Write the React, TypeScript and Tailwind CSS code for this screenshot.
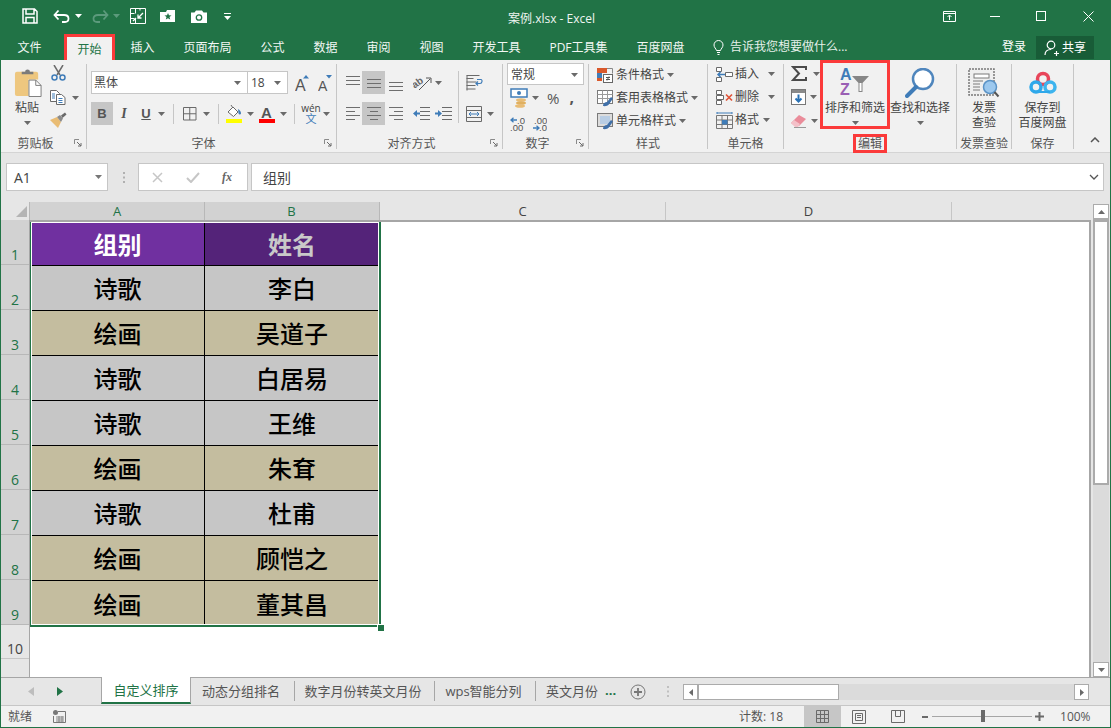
import React from "react";

const Caret = ({ c = "#6a6a6a", className = "" }: { c?: string; className?: string }) => (
  <svg width="7" height="4" viewBox="0 0 7 4" className={`shrink-0 ${className}`}><path d="M0 0h7L3.5 4z" fill={c} /></svg>
);

const Launcher = () => (
  <svg width="8" height="8" viewBox="0 0 8 8" className="absolute right-[4px] top-[2px]">
    <path d="M.5 5V.5H5" fill="none" stroke="#8a8a8a" /><path d="M3 3l4 4M7 4v3H4" fill="none" stroke="#6a6a6a" />
  </svg>
);

const Group = ({ w, label, launcher, children, boxed }: { w: string; label: string; launcher?: boolean; children: React.ReactNode; boxed?: boolean }) => (
  <div className={`${w} shrink-0 h-[85px] border-r border-[#c6c6c6] flex flex-col`}>
    <div className="h-[73px] flex">{children}</div>
    <div className={`h-[12px] relative flex justify-center text-[12px] leading-[13px] text-[#555] ${launcher ? "pr-[16px]" : ""}`}>
      {boxed ? <span className="px-[2px] h-[13px] outline-[3px] outline-[#fb3a3a] leading-[13px]">{label}</span> : <span>{label}</span>}
      {launcher && <Launcher />}
    </div>
  </div>
);

const Lines = ({ kind }: { kind: "top" | "mid" | "bot" | "left" | "center" | "right" }) => {
  const y = kind === "top" ? [3, 7, 11] : kind === "mid" ? [6, 10, 14] : kind === "bot" ? [9, 13, 17] : [3, 7, 11, 15];
  const xs: Record<string, [number, number][]> = {
    left: [[1, 15], [1, 10], [1, 15], [1, 10]],
    center: [[1, 15], [4, 12], [1, 15], [4, 12]],
    right: [[1, 15], [6, 15], [1, 15], [6, 15]],
  };
  return (
    <svg width="16" height="20" viewBox="0 0 16 20">
      {y.map((v, i) => {
        const p = xs[kind]?.[i] ?? [1, 15];
        return <path key={i} d={`M${p[0]} ${v}.5H${p[1]}`} stroke="#6e6e6e" />;
      })}
    </svg>
  );
};

const Paste = () => (
  <svg width="29" height="29" viewBox="0 0 30 30">
    <path d="M1 6a2 2 0 0 1 2-2h20a2 2 0 0 1 2 2v6H15v17H3a2 2 0 0 1-2-2z" fill="#eec77f" />
    <path d="M8 6V4h3.5a2.5 2.5 0 0 1 5 0H20v2.5H8z" fill="#7b7b7b" />
    <path d="M15.5 12.5h7l5.5 5.5v11.500H15.500z" fill="#fff" stroke="#7b7b7b" />
    <path d="M22.500 12.500v5.500H28" fill="none" stroke="#7b7b7b" />
  </svg>
);
const Scissors = () => (
  <svg width="15" height="16" viewBox="0 0 15 16">
    <path d="M3 0l6 10M12 0L6 10" stroke="#6b6b6b" strokeWidth="1.500" />
    <circle cx="3.500" cy="12.500" r="2.500" fill="none" stroke="#3f7cb8" strokeWidth="1.500" />
    <circle cx="11.500" cy="12.500" r="2.500" fill="none" stroke="#3f7cb8" strokeWidth="1.500" />
  </svg>
);
const Copy = () => (
  <svg width="16" height="15" viewBox="0 0 16 15">
    <path d="M.5.5h6l3 3v8H.5z" fill="#fff" stroke="#6a6a6a" />
    <path d="M6.500 4.500h5l3.500 3v7H6.500z" fill="#fff" stroke="#6a6a6a" />
    <path d="M2 4h3M2 6h3M2 8h3M8.500 8.500h4M8.500 10.500h4M8.500 12.500h4" stroke="#3f7cb8" />
  </svg>
);
const Brush = () => (
  <svg width="17" height="16" viewBox="0 0 17 16">
    <path d="M0 8l7-3 4 5-3 6z" fill="#e9bc74" />
    <path d="M7 5l3-2 3 3.500-2 3.500z" fill="#8a8a8a" />
    <path d="M11 3.500l4-3 1.500 2-4 3.500z" fill="#6a6a6a" />
  </svg>
);

const GrowA = ({ up }: { up: boolean }) => (
  <svg width="14" height="18" viewBox="0 0 14 18">
    <text x="0" y="17" fontSize={up ? 16 : 14} fill="#555" fontFamily="Liberation Sans, sans-serif">A</text>
    <path d={up ? "M8 4.500h6L11 1z" : "M8 1h6l-3 3.500z"} fill="#3f7cb8" />
  </svg>
);

const Borders = () => (
  <svg width="14" height="14" viewBox="0 0 14 14"><path d="M.5.500h12.500v12.500H.500zM.500 6.750h12.500M6.750.500v12.500" fill="none" stroke="#6a6a6a" /></svg>
);
const FillBucket = () => (
  <svg width="17" height="18" viewBox="0 0 17 18">
    <path d="M2 7l5-5 5 5-4.500 4.500z" fill="#fff" stroke="#6a6a6a" />
    <path d="M12 4c2 1 3 3 3 4.500a1.300 1.300 0 0 1-2.500 0z" fill="#3f7cb8" />
    <path d="M5 0l2 3" stroke="#6a6a6a" />
    <rect x="0" y="14" width="16" height="4" fill="#ffff00" />
  </svg>
);
const FontColor = () => (
  <svg width="16" height="18" viewBox="0 0 16 18">
    <text x="2" y="13" fontSize="15" fill="#555" fontWeight="700" fontFamily="Liberation Sans, sans-serif">A</text>
    <rect x="0" y="14" width="16" height="4" fill="#ff0000" />
  </svg>
);

const Orientation = () => (
  <svg width="20" height="16" viewBox="0 0 20 16">
    <text x="0" y="11" fontSize="10" fontWeight="700" transform="rotate(-35 5 10)" fill="#666" fontFamily="Liberation Sans, sans-serif">ab</text>
    <path d="M6 15L17 4M13 3h5v5" fill="none" stroke="#555" />
  </svg>
);
const Wrap = () => (
  <svg width="17" height="16" viewBox="0 0 17 16">
    <path d="M.500.500h13M.500 3.500h7M.500 7h10M.500 10.500h9M.500 14h9" stroke="#6a6a6a" />
    <path d="M1 .500v15" stroke="#6a6a6a" />
    <path d="M11 4.500h4c1.500 0 1.500 4-1 4h-4M12 6.500l-2 2 2 2" fill="none" stroke="#3f7cb8" strokeWidth="1.200" />
  </svg>
);
const Indent = ({ inc }: { inc: boolean }) => (
  <svg width="17" height="13" viewBox="0 0 17 13">
    <path d="M7 .500h10M7 4.500h10M7 8.500h10M7 12.500h10" stroke="#6a6a6a" />
    <path d={inc ? "M0 5.500h3V3l4 3.500-4 3.500V7.500H0z" : "M7 5.500H4V3L0 6.500l4 3.500V7.500h3z"} fill="#3f7cb8" />
  </svg>
);
const Merge = () => (
  <svg width="16" height="16" viewBox="0 0 16 16">
    <path d="M.500.500h15v15H.500zM.500 4.500h15M.500 11.500h15" fill="none" stroke="#6a6a6a" />
    <path d="M3 8h10M5 6L3 8l2 2M11 6l2 2-2 2" fill="none" stroke="#3f7cb8" />
  </svg>
);

const Currency = () => (
  <svg width="18" height="20" viewBox="0 0 18 20">
    <rect x="1" y="1" width="16" height="8" fill="#fff" stroke="#3f7cb8" strokeWidth="1.500" />
    <circle cx="9" cy="5" r="2" fill="#3f7cb8" />
    <ellipse cx="11" cy="12" rx="5" ry="1.800" fill="#e9bc74" />
    <ellipse cx="11" cy="15" rx="5" ry="1.800" fill="#e0b060" />
    <ellipse cx="10" cy="18" rx="5" ry="1.800" fill="#e9bc74" />
  </svg>
);
const Dec = ({ inc }: { inc: boolean }) => (
  <svg width="15" height="14" viewBox="0 0 15 14" fontFamily="Liberation Sans, sans-serif" fontSize="9.500" fill="#555">
    {inc ? (
      <>
        <path d="M7 3H1M3.500.800L1 3l2.500 2.200" fill="none" stroke="#3f7cb8" strokeWidth="1.300" />
        <text x="7" y="6.500">.0</text><text x="0" y="14">.00</text>
      </>
    ) : (
      <>
        <text x="2" y="6.500">.00</text>
        <path d="M1 11h6M4.500 8.800L7 11l-2.500 2.200" fill="none" stroke="#3f7cb8" strokeWidth="1.300" />
        <text x="7" y="14">.0</text>
      </>
    )}
  </svg>
);

const CondFmt = () => (
  <svg width="16" height="15" viewBox="0 0 16 15">
    <rect x="0" y="0" width="10" height="5" fill="#d9582b" /><rect x="0" y="5" width="5" height="8" fill="#3f7cb8" />
    <rect x="0" y="10" width="5" height="3" fill="#d9582b" />
    <path d="M10 .500h5.500v5" fill="none" stroke="#888" />
    <rect x="6.500" y="6.500" width="9" height="8" fill="#fff" stroke="#666" />
    <path d="M9 9.500h4M9 11.500h4M12 8.500l-2 4" stroke="#555" />
  </svg>
);
const TableFmt = ({ cell }: { cell?: boolean }) => (
  <svg width="17" height="17" viewBox="0 0 17 17">
    <rect x=".500" y=".500" width="15" height="13" fill={cell ? "#dcdcdc" : "#fff"} stroke="#7a7a7a" />
    {cell ? <rect x="3" y="3" width="10" height="8" fill="#b8cde4" /> : <path d="M.500 4.500h15M.500 8.500h15M5.500.500v13M10.500.500v13" stroke="#9a9a9a" fill="none" />}
    <path d="M6 16c0-3 2-4 4-4l4-5 2 1.500-3.500 5c-.500 2-4 3-6.500 2.500z" fill="#3f6fa8" />
  </svg>
);
const CellIns = () => (
  <svg width="17" height="15" viewBox="0 0 17 15">
    <path d="M.500.500h5v4h-5zM.500 10.500h5v4h-5zM9.500 5.500h7v4h-7z" fill="#fff" stroke="#6a6a6a" />
    <path d="M9 7.500H2M4.500 5L2 7.500 4.500 10" fill="none" stroke="#3f7cb8" strokeWidth="1.500" />
  </svg>
);
const CellDel = () => (
  <svg width="17" height="15" viewBox="0 0 17 15">
    <path d="M.500.500h5v4h-5zM.500 10.500h5v4h-5zM.500 5.500h7v4h-7z" fill="#fff" stroke="#6a6a6a" />
    <path d="M10 4.500l6 6M16 4.500l-6 6" stroke="#e0553a" strokeWidth="1.700" />
  </svg>
);
const CellFmt = () => (
  <svg width="17" height="17" viewBox="0 0 17 17">
    <path d="M.500 3.500h16v13H.500zM.500 8h16M.500 12.500h16M6 3.500v13M11.500 3.500v13" fill="none" stroke="#777" />
    <rect x="6" y="8" width="5.500" height="4.500" fill="#3f7cb8" />
    <path d="M1 1h15M1 0v2M16 0v2" stroke="#3f7cb8" />
  </svg>
);

const Sigma = () => (
  <svg width="16" height="15" viewBox="0 0 16 15"><path d="M15 4V1H2l6 6.500L2 14h13v-3" fill="none" stroke="#4a4a4a" strokeWidth="2" /></svg>
);
const FillDown = () => (
  <svg width="15" height="16" viewBox="0 0 15 16">
    <rect x=".500" y=".500" width="14" height="15" fill="#fff" stroke="#777" />
    <rect x="1" y="1" width="13" height="3" fill="#8a8a8a" />
    <path d="M7.500 5.500v7M4.500 9.500l3 3 3-3" fill="none" stroke="#2a72b5" strokeWidth="2" />
  </svg>
);
const Eraser = () => (
  <svg width="16" height="14" viewBox="0 0 16 14">
    <path d="M0 9l8-8 7 4-7 7H4z" fill="#ea8c9a" /><path d="M0 9l3-3 6 4-2 3H4z" fill="#f4c0c8" />
    <path d="M3 13.500h12" stroke="#999" />
  </svg>
);
const SortFilter = () => (
  <svg width="32" height="30" viewBox="0 0 32 30" fontFamily="Liberation Sans, sans-serif" fontSize="16">
    <text x="1" y="12" fill="#3f7cb8" fontWeight="700">A</text>
    <text x="1" y="27" fill="#9a5fb4" fontWeight="700">Z</text>
    <path d="M13 8h17l-6.500 7v9h-4v-9z" fill="#868686" />
    <path d="M20.500 15v8h2v-8z" fill="#fff" />
  </svg>
);
const Magnifier = () => (
  <svg width="30" height="30" viewBox="0 0 30 30">
    <circle cx="18" cy="11" r="10" fill="#fff" stroke="#4f86bd" strokeWidth="2.500" />
    <path d="M11 19L2 28" stroke="#3f7cb8" strokeWidth="4" strokeLinecap="round" />
  </svg>
);
const Invoice = () => (
  <svg width="32" height="30" viewBox="0 0 32 30">
    <rect x="1" y="1" width="25" height="26" fill="#efefef" stroke="#7a7a7a" strokeWidth="1.500" strokeDasharray="2 1" />
    <rect x="6" y="6" width="15" height="4" fill="#fff" stroke="#7a7a7a" />
    <path d="M5 13h10M5 16h7M5 19h7M5 22h7" stroke="#7a7a7a" />
    <circle cx="22" cy="19" r="6.500" fill="#9cc8ee" stroke="#5b93c6" strokeWidth="1.500" />
    <path d="M26.500 24l4 4.500" stroke="#555" strokeWidth="2" />
  </svg>
);
const BaiduCloud = () => (
  <svg width="28" height="24" viewBox="0 0 28 24" fill="none">
    <circle cx="14" cy="8" r="5.500" stroke="#e8455a" strokeWidth="3.500" />
    <circle cx="7" cy="16" r="5" stroke="#2fa8ea" strokeWidth="3.500" />
    <circle cx="21" cy="16" r="5" stroke="#3db4ee" strokeWidth="3.500" />
    <path d="M7 21h14" stroke="#2fa8ea" strokeWidth="2" />
  </svg>
);

const Save = () => (
  <svg width="16" height="16" viewBox="0 0 16 16" fill="none" stroke="#fff" strokeWidth="1.500">
    <path d="M1 1h11.500L15 3.500V15H1zM4 1v5h8V1M4 15V9.500h8V15" />
  </svg>
);

const Small = ({ icon, text, caretMl, mt }: { icon: React.ReactNode; text: string; caretMl: string; mt: string }) => (
  <div className={`flex items-center h-[18px] ${mt}`}>
    <div className="w-[19px] flex justify-start">{icon}</div>
    <span className="text-[12px] text-[#444] leading-[18px] whitespace-nowrap">{text}</span>
    <Caret className={caretMl} />
  </div>
);

const Large = ({ icon, l1, l2, caret, w, iconH = "h-[30px]" }: { icon: React.ReactNode; l1: string; l2?: string; caret?: boolean; w: string; iconH?: string }) => (
  <div className={`${w} flex flex-col items-center text-[12px] leading-[15px] text-[#444] whitespace-nowrap`}>
    <div className={`${iconH} flex items-center`}>{icon}</div>
    <div className="mt-[2px]">{l1}</div>
    {l2 && <div>{l2}</div>}
    {caret && <Caret className="mt-[6px]" />}
  </div>
);

const Tab = ({ t, w }: { t: string; w: string }) => (
  <div className={`${w} text-center text-[12px] leading-[28px] pt-[2px] h-[28px] text-[#f2f7f4] whitespace-nowrap`}>{t}</div>
);

const rows: [string, string, boolean][] = [
  ["诗歌", "李白", false],
  ["绘画", "吴道子", true],
  ["诗歌", "白居易", false],
  ["诗歌", "王维", false],
  ["绘画", "朱耷", true],
  ["诗歌", "杜甫", false],
  ["绘画", "顾恺之", true],
  ["绘画", "董其昌", true],
];

const RowNum = ({ n, h, sel }: { n: number; h: string; sel?: boolean }) => (
  <div className={`${h} flex items-end justify-center border-b text-[14px] leading-[18px] ${sel ? "bg-[#d2d2d2] border-[#b8b8b8] text-[#217346]" : "bg-[#e6e6e6] border-[#c6c6c6] text-[#444]"}`}>{n}</div>
);

export default function App() {
  return (
    <div className="w-[1111px] h-[728px] overflow-hidden bg-[#e6e6e6] border-x border-b border-[#217346] flex flex-col font-['Open_Sans','Noto_Sans_CJK_SC',sans-serif]">
      {/* title bar */}
      <div className="h-[32px] bg-[#217346] flex items-center shrink-0 text-white">
        <div className="w-[507px] flex items-center pl-[21px]">
          <Save />
          <svg width="18" height="14" viewBox="0 0 18 14" className="ml-[15px]" fill="none" stroke="#fff" strokeWidth="1.800"><path d="M1.500 6H11c3 0 4.500 1.500 4.500 3.500S14 13 12 13H9M5.500 1.500L1.500 6l4 4.500" /></svg>
          <Caret c="#fff" className="ml-[4px]" />
          <svg width="18" height="14" viewBox="0 0 18 14" className="ml-[9px]" fill="none" stroke="#5c9a7c" strokeWidth="1.800"><path d="M16.500 6H7C4 6 2.500 7.500 2.500 9.500S4 13 6 13h3M12.500 1.500l4 4.500-4 4.500" /></svg>
          <Caret c="#5c9a7c" className="ml-[4px]" />
          <svg width="16" height="16" viewBox="0 0 16 16" className="ml-[10px]" fill="none" stroke="#fff"><path d="M.500.500h15v15H.500zM.500 5.500h4M.500 10.500h4M5.500.500v5M5.500 10v5.500M10 .500v2" /><path d="M13 5l-5 5M8 6.500V10h3.500M3 13l3-3" strokeWidth="1.300" /></svg>
          <svg width="16" height="14" viewBox="0 0 16 14" className="ml-[14px]"><path d="M0 3h6l1-2h8v12H0z" fill="#fff" /><path d="M8 4l1 2.300 2.500.200-2 1.600.700 2.400L8 9.200 5.800 10.500l.700-2.400-2-1.600 2.500-.200z" fill="#217346" /></svg>
          <svg width="16" height="13" viewBox="0 0 16 13" className="ml-[15px]"><path d="M0 2.500h3.500L5 .500h6l1.500 2H16V13H0z" fill="#fff" /><circle cx="8" cy="7.500" r="2.700" fill="none" stroke="#217346" strokeWidth="1.300" /></svg>
          <svg width="7" height="7" viewBox="0 0 7 7" className="ml-[17px]"><path d="M0 .500h7" stroke="#fff" /><path d="M0 3h7L3.500 7z" fill="#fff" /></svg>
        </div>
        <div className="w-[120px] pt-[6px] text-[12px] whitespace-nowrap text-[#eef5f1]">案例.xlsx - Excel</div>
        <div className="flex-1 flex items-center justify-end">
          <svg width="13" height="11" viewBox="0 0 13 11" className="mr-[34px]" fill="none" stroke="#fff"><path d="M.500.500h12v10H.500zM.500 2.500h12M6.500 9V4.500M4.500 6l2-2 2 2" /></svg>
          <div className="w-[10px] h-px bg-white mr-[36px]" />
          <div className="w-[10px] h-[10px] border border-white mr-[37px]" />
          <svg width="11" height="11" viewBox="0 0 11 11" className="mr-[16px]" stroke="#fff"><path d="M.500.500l10 10M10.500.500l-10 10" /></svg>
        </div>
      </div>

      {/* tabs */}
      <div className="h-[28px] bg-[#217346] flex items-end shrink-0">
        <Tab t="文件" w="w-[63px] pr-[6px]" />
        <div className="w-[51px] h-[26px] border-[3px] border-b-0 border-[#fb3a3a] bg-[#f1f1f1] text-center text-[12px] leading-[25px] text-[#217346] box-border">开始</div>
        <Tab t="插入" w="w-[53px] ml-[1px]" />
        <Tab t="页面布局" w="w-[77px]" />
        <Tab t="公式" w="w-[53px]" />
        <Tab t="数据" w="w-[53px]" />
        <Tab t="审阅" w="w-[53px]" />
        <Tab t="视图" w="w-[53px]" />
        <Tab t="开发工具" w="w-[77px]" />
        <Tab t="PDF工具集" w="w-[87px]" />
        <Tab t="百度网盘" w="w-[77px]" />
        <div className="h-[28px] flex items-center pt-[2px] ml-[14px] text-[12px] text-[#e6f0ea] whitespace-nowrap">
          <svg width="11" height="15" viewBox="0 0 11 15" fill="none" stroke="#fff" className="mr-[6px]"><path d="M3.500 10.500C3 8.500 1 7.500 1 5a4.500 4.500 0 0 1 9 0c0 2.500-2 3.500-2.500 5.500zM4 12.500h3M4.500 14.500h2" /></svg>
          告诉我您想要做什么...
        </div>
        <div className="flex-1 flex items-center justify-end h-[28px] text-[12px] text-white">
          <span className="mr-[10px] pt-[2px]">登录</span>
          <div className="w-[58px] h-[23px] mr-[16px] bg-[#185c37] flex items-center justify-center mt-[3px] gap-[3px]">
            <svg width="15" height="16" viewBox="0 0 15 16" fill="none" stroke="#fff" strokeWidth="1.200"><circle cx="7" cy="5" r="3.800" /><path d="M1 15c0-3 2-5.500 6-5.500M10 13.500h5M12.500 11v5" /></svg>
            共享
          </div>
        </div>
      </div>

      {/* ribbon */}
      <div className="h-[93px] bg-[#f1f1f1] border-b border-[#d4d4d4] flex pt-[4px] shrink-0">
        <Group w="w-[86px]" label="剪贴板" launcher>
          <div className="w-[49px] pl-[11px] flex flex-col">
            <Large w="w-[30px]" icon={<Paste />} l1="粘贴" caret iconH="h-[33px] mt-[1px] pl-[2px] pt-[2px]" />
          </div>
          <div className="flex flex-col">
            <div className="h-[16px] mt-[1px] ml-[1px] flex"><Scissors /></div>
            <div className="mt-[9px] flex items-center"><Copy /><Caret className="ml-[6px]" /></div>
            <div className="mt-[7px]"><Brush /></div>
          </div>
        </Group>

        <Group w="w-[250px]" label="字体" launcher>
          <div className="pl-[4px] pt-[7px] flex flex-col">
            <div className="flex items-center h-[23px]">
              <div className="w-[157px] h-[23px] border border-[#c6c6c6] bg-white flex items-center justify-between pl-[2px] pr-[6px] text-[12px] text-[#444]">黑体<Caret /></div>
              <div className="w-[40px] h-[23px] border border-l-0 border-[#c6c6c6] bg-white flex items-center justify-between pl-[3px] pr-[6px] text-[12px] text-[#444]">18<Caret /></div>
              <div className="ml-[7px]"><GrowA up /></div>
              <div className="ml-[9px]"><GrowA up={false} /></div>
            </div>
            <div className="flex items-center h-[23px] mt-[8px] text-[#555]">
              <div className="w-[22px] h-[23px] bg-[#c6c6c6] flex items-center justify-center text-[13px] font-bold font-['Liberation_Sans']">B</div>
              <div className="w-[22px] text-center text-[14px] italic font-['Liberation_Serif'] font-bold">I</div>
              <div className="w-[22px] text-center text-[13px] font-bold underline font-['Liberation_Sans']">U</div>
              <Caret className="ml-[1px]" />
              <div className="w-px h-[20px] bg-[#c6c6c6] ml-[8px]" />
              <div className="ml-[9px]"><Borders /></div>
              <Caret className="ml-[6px]" />
              <div className="w-px h-[20px] bg-[#c6c6c6] ml-[8px]" />
              <div className="ml-[7px]"><FillBucket /></div>
              <Caret className="ml-[4px]" />
              <div className="ml-[5px]"><FontColor /></div>
              <Caret className="ml-[5px]" />
              <div className="w-px h-[20px] bg-[#c6c6c6] ml-[7px]" />
              <div className="ml-[8px] w-[16px] flex flex-col items-center text-[10px] leading-[10px] text-[#444]">wén<span className="text-[#3f7cb8] text-[11px] leading-[11px]">文</span></div>
              <Caret className="ml-[4px]" />
            </div>
          </div>
        </Group>

        <Group w="w-[166px]" label="对齐方式" launcher>
          <div className="pl-[8px] pt-[7px] flex">
            <div className="flex flex-col w-[68px]">
              <div className="flex items-center h-[23px]">
                <Lines kind="top" />
                <div className="w-[23px] h-[23px] bg-[#c6c6c6] ml-[1px] flex items-center justify-center"><Lines kind="mid" /></div>
                <div className="ml-[3px]"><Lines kind="bot" /></div>
              </div>
              <div className="flex items-center h-[23px] mt-[8px]">
                <Lines kind="left" />
                <div className="w-[23px] h-[23px] bg-[#c6c6c6] ml-[1px] flex items-center justify-center"><Lines kind="center" /></div>
                <div className="ml-[3px]"><Lines kind="right" /></div>
              </div>
            </div>
            <div className="flex flex-col w-[45px]">
              <div className="flex items-center h-[23px]"><Orientation /><Caret className="ml-[2px]" /></div>
              <div className="flex items-center h-[23px] mt-[8px] gap-[5px]"><Indent inc={false} /><Indent inc /></div>
            </div>
            <div className="w-px h-[52px] bg-[#c6c6c6]" />
            <div className="flex flex-col pl-[7px]">
              <div className="flex items-center h-[23px]"><Wrap /></div>
              <div className="flex items-center h-[23px] mt-[8px]"><Merge /><Caret className="ml-[5px]" /></div>
            </div>
          </div>
        </Group>

        <Group w="w-[86px]" label="数字" launcher>
          <div className="pl-[4px] flex flex-col">
            <div className="w-[77px] h-[22px] -mt-[1px] border border-[#c6c6c6] bg-white flex items-center justify-between pl-[3px] pr-[5px] pt-[1px] text-[12px] text-[#444]">常规<Caret /></div>
            <div className="flex items-center h-[20px] mt-[3px] pl-[3px]">
              <Currency />
              <Caret className="ml-[4px]" />
              <span className="ml-[8px] text-[15px] leading-[18px] text-[#555]">%</span>
              <span className="ml-[10px] text-[16px] font-bold leading-[18px] text-[#555] -mt-[3px]">,</span>
            </div>
            <div className="flex items-center mt-[9px] pl-[3px] gap-[7px]"><Dec inc /><Dec inc={false} /></div>
          </div>
        </Group>

        <Group w="w-[119px]" label="样式">
          <div className="pl-[8px] flex flex-col">
            <Small icon={<CondFmt />} text="条件格式" caretMl="ml-[3px]" mt="mt-[2px]" />
            <Small icon={<TableFmt />} text="套用表格格式" caretMl="ml-[3px]" mt="mt-[5px]" />
            <Small icon={<TableFmt cell />} text="单元格样式" caretMl="ml-[3px]" mt="mt-[5px]" />
          </div>
        </Group>

        <Group w="w-[76px]" label="单元格">
          <div className="pl-[8px] flex flex-col">
            <Small icon={<CellIns />} text="插入" caretMl="ml-[9px]" mt="mt-[1px]" />
            <Small icon={<CellDel />} text="删除" caretMl="ml-[9px]" mt="mt-[5px]" />
            <Small icon={<CellFmt />} text="格式" caretMl="ml-[4px]" mt="mt-[5px]" />
          </div>
        </Group>

        <Group w="w-[173px]" label="编辑" boxed>
          <div className="w-[36px] pl-[7px] flex flex-col">
            <div className="flex items-center h-[15px] mt-[2px]"><Sigma /><Caret className="ml-[6px]" /></div>
            <div className="flex items-center h-[16px] mt-[8px]"><FillDown /><Caret className="ml-[4px]" /></div>
            <div className="flex items-center h-[14px] mt-[9px]"><Eraser /><Caret className="ml-[4px]" /></div>
          </div>
          <div className="w-[70px] h-[69px] -mt-[4px] border-[3px] border-[#fb3a3a] flex flex-col items-center pt-[5px] text-[12px] leading-[15px] text-[#444] whitespace-nowrap">
            <SortFilter />
            <div className="mt-[2px]">排序和筛选</div>
            <Caret className="mt-[6px]" />
          </div>
          <div className="pt-[4px]"><Large w="w-[60px]" icon={<Magnifier />} l1="查找和选择" caret /></div>
        </Group>

        <Group w="w-[55px]" label="发票查验">
          <div className="pt-[4px]"><Large w="w-[54px]" icon={<Invoice />} l1="发票" l2="查验" /></div>
        </Group>

        <Group w="w-[62px]" label="保存">
          <div className="pt-[4px]"><Large w="w-[61px]" icon={<BaiduCloud />} l1="保存到" l2="百度网盘" /></div>
        </Group>

        <div className="flex-1 flex items-end justify-end pr-[10px] pb-[9px]">
          <svg width="10" height="6" viewBox="0 0 10 6" fill="none" stroke="#555" strokeWidth="1.500"><path d="M1 5l4-4 4 4" /></svg>
        </div>
      </div>

      {/* formula bar */}
      <div className="h-[49px] flex pt-[10px] pl-[5px] pr-[6px] shrink-0 bg-[#e6e6e6]">
        <div className="w-[102px] h-[28px] bg-white border border-[#c6c6c6] flex items-center justify-between pl-[7px] pr-[5px] text-[14px] text-[#444]">A1<Caret c="#777" /></div>
        <div className="w-[30px] flex justify-center items-center h-[28px]">
          <svg width="3" height="11" viewBox="0 0 3 11"><path d="M1 0h2v2H1zM1 4.500h2v2H1zM1 9h2v2H1z" fill="#b0b0b0" /></svg>
        </div>
        <div className="w-[110px] h-[28px] bg-white border border-[#c6c6c6] flex items-center pl-[13px]">
          <svg width="11" height="11" viewBox="0 0 11 11" stroke="#c6c6c6" strokeWidth="1.500"><path d="M1 1l9 9M10 1l-9 9" /></svg>
          <svg width="14" height="11" viewBox="0 0 14 11" fill="none" stroke="#c6c6c6" strokeWidth="2" className="ml-[23px]"><path d="M1 6l4 4 8-9" /></svg>
          <span className="ml-[22px] text-[12px] italic font-bold text-[#666] font-['Liberation_Serif']">fx</span>
        </div>
        <div className="flex-1 ml-[3px] h-[28px] bg-white border border-[#c6c6c6] flex items-center justify-between pl-[11px] pr-[4px] text-[14px] text-[#444]">组别<svg width="10" height="6" viewBox="0 0 10 6" fill="none" stroke="#555" strokeWidth="1.300"><path d="M1 1l4 4 4-4" /></svg></div>
      </div>

      {/* sheet */}
      <div className="flex flex-1 min-h-0">
        <div className="flex-1 flex flex-col min-w-0">
          {/* column headers */}
          <div className="h-[18px] flex shrink-0 text-[13px] leading-[19px] text-center text-[#444]">
            <div className="w-[28px] flex items-end justify-end pr-[2px] pb-[3px]">
              <svg width="11" height="11" viewBox="0 0 11 11"><path d="M11 0v11H0z" fill="#b4b4b4" /></svg>
            </div>
            <div className="w-[175px] bg-[#d2d2d2] border-l border-[#b8b8b8] text-[#217346]">A</div>
            <div className="w-[176px] bg-[#d2d2d2] border-l border-[#b8b8b8] text-[#217346] border-r pr-[1px]">B</div>
            <div className="w-[286px] border-r border-[#c6c6c6]">C</div>
            <div className="w-[286px] border-r border-[#c6c6c6]">D</div>
          </div>
          <div className="flex flex-1 min-h-0">
            <div className="w-[28px] shrink-0 flex flex-col bg-[#e6e6e6]">
              {[1, 2, 3, 4, 5, 6, 7, 8, 9].map((n) => <RowNum key={n} n={n} h="h-[45px]" sel />)}
              <RowNum n={10} h="h-[34px]" />
            </div>
            <div className="flex-1 bg-white border-l border-t-2 border-r-2 border-[#a6a6a6] relative overflow-hidden">
              <div className="w-[349px] pl-[1px] flex flex-col text-black font-['Noto_Sans_CJK_SC',sans-serif]">
                <div className="flex h-[44px] border-b border-black font-bold text-[24px]">
                  <div className="w-[173px] bg-[#7030a0] text-white flex items-center justify-center">组别</div>
                  <div className="flex-1 bg-[#542379] border-l border-black text-[#c9c9c9] flex items-center justify-center">姓名</div>
                </div>
                {rows.map(([a, b, tan], i) => (
                  <div key={i} className={`flex h-[45px] ${i < 7 ? "border-b border-black" : ""} ${tan ? "bg-[#c4bd9f]" : "bg-[#c6c6c6]"}`}>
                    <div className="w-[173px] flex items-center justify-center text-[24px] font-medium">{a}</div>
                    <div className="flex-1 border-l border-black flex items-center justify-center text-[24px] font-medium">{b}</div>
                  </div>
                ))}
              </div>
              <div className="absolute left-[-1px] top-[-2px] w-[352px] h-[407px] border-2 border-[#217346] pointer-events-none">
                <div className="w-full h-full border border-white" />
              </div>
              <div className="absolute left-[347px] top-[402px] w-[6px] h-[6px] bg-[#217346] border border-white box-content" />
            </div>
          </div>
        </div>
        <div className="w-[19px] shrink-0 flex flex-col pt-[2px] pl-[2px] pr-[1px]">
          <div className="h-[15px] border border-[#ababab] bg-white flex items-center justify-center"><svg width="7" height="4" viewBox="0 0 7 4"><path d="M0 4h7L3.500 0z" fill="#6a6a6a" /></svg></div>
          <div className="h-[266px] border-2 border-t-[3px] border-[#ababab] bg-white" />
          <div className="flex-1 bg-[#dbdbdb]" />
          <div className="h-[15px] border border-[#ababab] bg-white flex items-center justify-center"><Caret /></div>
        </div>
      </div>

      {/* sheet tabs */}
      <div className="h-[28px] shrink-0 border-t border-[#a6a6a6] flex bg-[#e6e6e6] text-[13px] text-[#555] leading-[27px] whitespace-nowrap">
        <div className="w-[100px] flex items-center pl-[27px] gap-[23px]">
          <svg width="6" height="9" viewBox="0 0 6 9"><path d="M6 0v9L0 4.500z" fill="#bdbdbd" /></svg>
          <svg width="6" height="9" viewBox="0 0 6 9"><path d="M0 0v9l6-4.500z" fill="#217346" /></svg>
        </div>
        <div className="w-[90px] h-[27px] bg-white border-x border-b-2 border-x-[#a6a6a6] border-b-[#217346] -mt-px text-center text-[#217346]">自定义排序</div>
        <div className="w-[103px] text-center pr-[3px]">动态分组排名</div>
        <div className="w-px h-[20px] bg-[#a6a6a6] mt-[3px]" />
        <div className="w-[139px] text-center pr-[3px]">数字月份转英文月份</div>
        <div className="w-px h-[20px] bg-[#a6a6a6] mt-[3px]" />
        <div className="w-[100px] text-center pr-[3px]">wps智能分列</div>
        <div className="w-px h-[20px] bg-[#a6a6a6] mt-[3px]" />
        <div className="w-[62px] pl-[10px]">英文月份</div>
        <div className="w-[32px] pl-[7px] text-[#217346] font-bold leading-[24px]">...</div>
        <div className="flex items-center">
          <svg width="16" height="16" viewBox="0 0 16 16" fill="none" stroke="#777"><circle cx="8" cy="8" r="7" /><path d="M8 4v8M4 8h8" strokeWidth="1.800" /></svg>
        </div>
        <div className="w-[29px] flex items-center justify-center ml-[8px]">
          <svg width="3" height="11" viewBox="0 0 3 11"><path d="M0 0h2v2H0zM0 4.500h2v2H0zM0 9h2v2H0z" fill="#c0c0c0" /></svg>
        </div>
        <div className="h-[16px] w-[406px] mt-[6px] bg-[#dbdbdb] flex">
          <div className="w-[15px] h-[16px] border border-[#ababab] bg-white flex items-center justify-center"><svg width="4" height="7" viewBox="0 0 4 7"><path d="M4 0v7L0 3.500z" fill="#6a6a6a" /></svg></div>
          <div className="w-[141px] h-[16px] border border-[#ababab] bg-white" />
          <div className="flex-1" />
          <div className="w-[15px] h-[16px] border border-[#ababab] bg-white flex items-center justify-center"><svg width="4" height="7" viewBox="0 0 4 7"><path d="M0 0v7l4-3.500z" fill="#6a6a6a" /></svg></div>
        </div>
      </div>

      {/* status bar */}
      <div className="h-[22px] shrink-0 border-t border-[#c6c6c6] bg-[#f1f1f1] flex items-center text-[12px] text-[#555] whitespace-nowrap">
        <span className="ml-[7px]">就绪</span>
        <svg width="13" height="13" viewBox="0 0 13 13" className="ml-[21px]" fill="none"><circle cx="2.500" cy="2.500" r="2.500" fill="#777" /><path d="M5 1.500h7.500v11H.500V6" stroke="#777" /><path d="M3 7h8M3 9h8M3 11h8M6 6v6M9 6v6" stroke="#888" /></svg>
        <span className="ml-[673px] w-[65px]">计数: 18</span>
        <div className="h-[21px] w-[37px] bg-[#c6c6c6] flex items-center justify-center">
          <svg width="13" height="13" viewBox="0 0 13 13" fill="none" stroke="#6a6a6a"><path d="M.500.500h12v12H.500zM.500 4.500h12M.500 8.500h12M4.500.500v12M8.500.500v12" /></svg>
        </div>
        <svg width="14" height="14" viewBox="0 0 14 14" fill="none" stroke="#6a6a6a" className="ml-[11px]"><path d="M.500.500h13v13H.500zM3.500 3.500h7v7h-7zM5 5.500h4M5 7.500h4" /></svg>
        <svg width="14" height="13" viewBox="0 0 14 13" fill="none" stroke="#6a6a6a" className="ml-[25px]"><path d="M.500.500h13v12H.500zM4.500.500v6h5v-6" /></svg>
        <div className="w-[6px] h-[2px] bg-[#6a6a6a] ml-[17px]" />
        <div className="w-[100px] h-px bg-[#a6a6a6] ml-[4px] relative">
          <div className="absolute left-[49px] -top-[6px] w-[4px] h-[12px] bg-[#6a6a6a]" />
        </div>
        <svg width="9" height="9" viewBox="0 0 9 9" className="ml-[3px]"><path d="M0 4.500h9M4.500 0v9" stroke="#6a6a6a" strokeWidth="2" /></svg>
        <span className="ml-[16px]">100%</span>
      </div>
    </div>
  );
}
